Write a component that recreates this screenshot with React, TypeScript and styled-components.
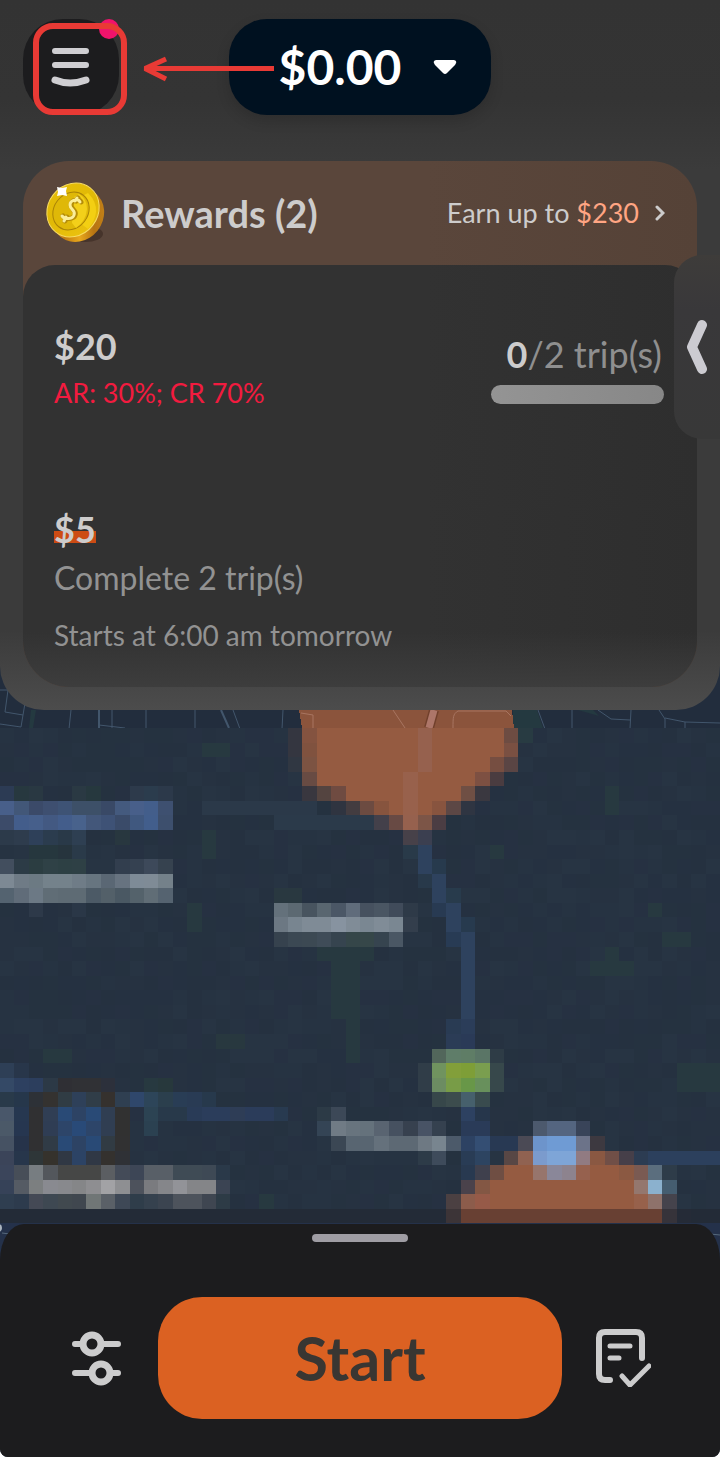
import React from 'react';
import styled, { createGlobalStyle } from 'styled-components';

const GlobalStyle = createGlobalStyle`
  * { box-sizing: border-box; }
  body { margin: 0; background: #ffffff; }
  button { border: 0; padding: 0; margin: 0; background: none; color: inherit; font: inherit; cursor: pointer; }
`;

const Screen = styled.div`
  position: relative;
  display: flex;
  flex-direction: column;
  min-height: 100vh;
  overflow: hidden;
  border-radius: 0 0 8px 8px;
  background: #263242;
  color: #cdcccc;
  font-family: Lato, 'Liberation Sans', sans-serif;
`;

const TopPanel = styled.header`
  position: relative;
  z-index: 1;
  display: flex;
  flex-direction: column;
  gap: 46px;
  padding: 19px 23px 23px;
  border-radius: 0 0 44px 44px;
  background: linear-gradient(180deg, #333333 0, #343434 100px, #3b3b3b 170px, #3b3b3b 630px, #4c4c4c 100%);
`;

const TopBar = styled.div`
  display: grid;
  grid-template-columns: 1fr auto 1fr;
  align-items: center;
`;

const MenuButton = styled.button`
  position: relative;
  width: 96px;
  height: 96px;
  border-radius: 40px;
  background: #1c1c1e;
`;

const MenuIcon = styled.svg`
  display: block;
`;

const Badge = styled.span`
  position: absolute;
  top: 0;
  right: 0;
  width: 20px;
  height: 20px;
  border-radius: 50%;
  background: #f0136b;
`;

const Annotation = styled.svg`
  position: absolute;
  top: 0;
  left: 0;
  z-index: 2;
  pointer-events: none;
`;

const BalanceButton = styled.button`
  display: flex;
  align-items: center;
  gap: 32px;
  height: 96px;
  padding: 0 34px 0 50px;
  border-radius: 38px;
  background: #001120;
  box-shadow: 0 6px 14px rgba(0, 0, 0, 0.14);
  color: #ffffff;
  font-size: 48px;
  font-weight: 700;
  line-height: 56px;
`;

const RewardsCard = styled.section`
  border-radius: 46px;
  background: linear-gradient(90deg, #5a463b 60%, #554237);
`;

const RewardsHeader = styled.div`
  display: flex;
  align-items: center;
  justify-content: space-between;
  height: 104px;
  padding: 0 32px 0 22px;
`;

const RewardsTitle = styled.h2`
  display: flex;
  align-items: center;
  gap: 14px;
  margin: 0;
  font-size: 38px;
  font-weight: 700;
  line-height: 44px;
`;

const EarnLink = styled.a`
  display: flex;
  align-items: center;
  gap: 16px;
  color: #cdcccc;
  font-size: 27px;
  line-height: 36px;
  text-decoration: none;
`;

const Accent = styled.span`
  color: #ffa583;
`;

const RewardsBody = styled.ul`
  display: flex;
  flex-direction: column;
  gap: 96px;
  margin: 0;
  padding: 59px 33px 34px 31px;
  border-radius: 32px 32px 46px 46px;
  background: linear-gradient(180deg, rgba(60, 60, 60, 0) 87%, #3d3d3d 100%), linear-gradient(90deg, #323232 60%, #2e2e2e);
  list-style: none;
`;

const Reward = styled.li`
  display: flex;
  justify-content: space-between;
`;

const RewardText = styled.div`
  display: flex;
  flex-direction: column;
  align-items: flex-start;
`;

const Amount = styled.strong<{ $marked?: boolean }>`
  background: ${(p) => (p.$marked ? 'linear-gradient(#cc4b14, #cc4b14) 0 24px / 100% 12px no-repeat' : 'none')};
  font-size: 36px;
  font-weight: 700;
  line-height: 44px;
`;

const Condition = styled.p<{ $alert?: boolean }>`
  margin: ${(p) => (p.$alert ? '7px 0 0' : '9px 0 0')};
  color: ${(p) => (p.$alert ? '#f21b3f' : '#929292')};
  font-size: ${(p) => (p.$alert ? '27px' : '32px')};
  line-height: 36px;
`;

const Schedule = styled.p`
  margin: 21px 0 0;
  color: #929292;
  font-size: 28px;
  line-height: 36px;
`;

const Progress = styled.div`
  display: flex;
  flex-direction: column;
  align-items: flex-end;
  gap: 9px;
  padding-top: 8px;
  color: #8f8f8f;
  font-size: 36px;
  line-height: 44px;
`;

const Count = styled.span`
  padding-right: 2px;
`;

const Done = styled.strong`
  color: #cdcccc;
  font-weight: 700;
`;

const Track = styled.div`
  width: 173px;
  height: 19px;
  border-radius: 10px;
  background: linear-gradient(90deg, #949494, #878787);
`;

const DrawerTab = styled.button`
  position: absolute;
  top: 255px;
  right: 0;
  z-index: 3;
  display: flex;
  align-items: center;
  justify-content: flex-end;
  width: 46px;
  height: 184px;
  padding-right: 12px;
  border-radius: 28px 0 0 28px;
  background: linear-gradient(180deg, #3e3c3a, #39383a 30%, #383838);
`;

const MapArea = styled.main`
  flex: 1;
  display: flex;
  min-height: 400px;
  margin: -60px 0 -44px;
`;

const MapDrawing = styled.svg`
  flex: 1;
  width: 100%;
  min-width: 0;
`;

const Sheet = styled.footer`
  position: relative;
  z-index: 1;
  display: flex;
  flex-direction: column;
  align-items: stretch;
  gap: 55px;
  padding: 10px 62px 38px;
  border-radius: 24px 24px 0 0 / 36px 36px 0 0;
  background: #1c1c1e;
`;

const Handle = styled.div`
  align-self: center;
  width: 96px;
  height: 8px;
  border-radius: 4px;
  background: #9f9da4;
`;

const Actions = styled.div`
  display: flex;
  align-items: center;
  gap: 26px;
`;

const IconButton = styled.button`
  display: flex;
  align-items: center;
  justify-content: center;
  width: 70px;
  height: 70px;
`;

const StartButton = styled.button`
  flex: 1;
  height: 122px;
  border-radius: 44px;
  background: #db6122;
  color: #393632;
  font-size: 61px;
  font-weight: 700;
  line-height: 72px;
`;

const O = '#955b41';
const ROAD = '#2e425e';
const GREEN = '#273940';

// Map tiles as [row, first column, colours from left to right]; '' leaves the ground showing.
type Tiles = [number, number, string[]];
const fill = (n: number, c: string): string[] => Array(n).fill(c);

const tiles: Tiles[] = [
  [50, 20, ['#343640', '#845340', ...fill(7, O), '#96614e', ...fill(5, O), '#6d4c42', '#283b42']],
  [51, 20, ['#343640', '#80523f', ...fill(7, O), '#96614e', ...fill(5, O), '#7a5042']],
  [52, 20, ['#303742', '#7c5342', ...fill(7, O), '#96614e', ...fill(4, O), '#764e41', '#5a4544']],
  [53, 21, ['#684b43', ...fill(6, O), '#98614c', ...fill(4, O), '#7d5042', '#4a3c40']],
  [54, 21, ['#39373f', '#544440', '#6f4b41', ...fill(4, O), '#98614c', ...fill(3, O), '#6f4f44', '#3a3840']],
  [55, 23, ['#2f3440', '#433c40', '#6c4b41', '#87543e', O, '#98614c', O, '#88543f', '#5c4745', '#2f3542']],
  [56, 26, ['#43404a', '#684a44', '#96614e', '#7c5547', '#4b3d43']],
  [57, 28, ['#474149', '#3b3f50']],
  [55, 12, ['', '', ...fill(8, '#2b3949')]],
  [56, 19, fill(7, '#2b3a4a')],
  [58, 28, ['#293a49', ROAD]],
  [59, 29, [ROAD, '#273a4d']],
  [60, 29, ['#28394a', ROAD]],
  [61, 30, [ROAD, '#283b4c']],
  [62, 30, ['#283a52', ROAD]],
  [63, 31, [ROAD, '#273a4e']],
  [64, 31, ['#283b54', ROAD]],
  ...[65, 66, 67, 68, 69].map((r): Tiles => [r, 32, [ROAD]]),
  [70, 31, ['#293b53', '#2b3d59']],
  [71, 31, ['#2b3c56', '#2a3a57']],
  [61, 19, ['#293840', '#293840']],
  [62, 19, ['#64717b', '#5c6972', '#48545f', '#596670', '#4b5766', '#606c7b', '#46515f', '#4a5663', '#404b5a', '#2e3a48']],
  [63, 19, ['#6c7883', '#788590', '#7f8b96', '#7f8b96', '#8793a0', '#808c97', '#7a8792', '#808c97', '#7a8792', '#333e4c']],
  [64, 19, ['#36424e', '#3b4853', '#3c4953', '#3f4c58', '#36444f', '#354649', '#364749', '#36444f', '#4a5764']],
  [54, 0, ['#2c3b54', '#27383f', '#293842', '', '', '#2a3943', '#26383e', '', '', '#2d3a4b', '#2b3c4d', '#2c394a']],
  [55, 0, ['#485f8a', '#425778', '#3b4a69', '#3e4f70', '#3e5375', '#3d5068', '#3d5068', '#394966', '#445a7e', '#485f8a', '#435e8b', '#3e5070']],
  [56, 0, ['#3c4b69', '#435d8b', '#465f8b', '#435982', '#435d8b', '#48628c', '#43577a', '#3e5276', '#3a4b69', '#40587f', '#425e8c', '#3d4f6d']],
  [57, 0, ['#2c3a4a', '#2e3c4d', '#2e4059', '#2b3c4e', '#293948', '#2e3f52', '', '', '#28373f']],
  [58, 0, ['', '', '#26373e', '#26373e', '#26343d', '#2a3a49']],
  [59, 0, ['#424e5e', '#2c3b46', '#2b3d41', '#2f4146', '#2d4044', '#2e4045', '', '', '#323e4e', '#354151', '#3d495a', '#36424f']],
  [60, 0, ['#7d8994', '#6f7b86', '#6c7a83', '#74828b', '#74828b', '#6f7c87', '#677580', '#5a6774', '#677380', '#7e8b97', '#7f8b96', '#74818a']],
  [61, 0, ['#546370', '#606c79', '#6c7985', '#606d76', '#5e6b74', '#5e6b74', '#4c5a66', '#536069', '#4a5863', '#54626b', '#606d76', '#556370']],
  [62, 2, ['#2d3949', '', '', '#2a3747']],
  [71, 14, ['', '#28383f', '#28383f']],
  [73, 0, ['#2e3f56', '#28364a']],
  [74, 0, ['#344966', '#2d4060', '#2c3e5d', '#2c3946', '#2f2f34', '#303135', '#303135', '#2c303b', '', '', GREEN, '#27383c']],
  [75, 0, ['#293a4a', '#26374b', '#2d3137', '#343230', '#303c44', '#2e4059', '#303d48', '#35312e', '#2f3f51', '#2f476b', '#2d4559', '#2b3f4d', '#293d55', '#293b54', '#27394c']],
  [76, 0, ['#49576a', '#263750', '#303032', '#303e54', '#294a76', '#2d4364', '#294a76', '#303e52', '#313131', '', '#2c4353', '#28394a', '#28394a', '#293b57', '#2b3d5b', '#2b3d5b', '#2e3d56', '#2b3c5a', '#2b3c5a', '#283a50']],
  [77, 0, ['#4b5968', '#263650', '#303032', '#2f3d54', '#2d4569', '#294a78', '#2d4569', '#303e52', '#313131', '', '#2b4151']],
  [78, 0, ['#465263', '#26334a', '#303032', '#303b46', '#294a76', '#2d4364', '#294a76', '#313b43', '#313132']],
  [79, 0, ['#3b4459', '#27364b', '#2e3638', '#35322c', '#303844', '#2c4365', '#303845', '#34312e', '#2f3136']],
  [80, 0, ['#3b455b', '#474e58', '#777d81', '#53575c', '#464746', '#464746', '#464746', '#5b5e62', '#444b58', '#3d4656', '#585f67', '#585f67', '#3f4b55', '#3f4b55', '#3e4955', '#2a3949']],
  [81, 0, ['#364258', '#555b64', '#7c7f80', '#898a90', '#88898d', '#858688', '#8e8e91', '#a2a2a5', '#8e8f92', '#4d525c', '#7a7b7f', '#85868a', '#929398', '#848588', '#848588', '#3b4453']],
  [82, 0, ['#2f3e50', '#2d3b4d', '#444955', '#3e4852', '#41494f', '#40474f', '#707676', '#5a6067', '#3e4856', '#2f3d4a', '#35414e', '#3b4450', '#4d535c', '#4d535c', '#3f4651', '#2d3b46']],
  [72, 30, ['#52665b', '#5f7d69', '#5f7d66', '#5a7566', '#2e3c46']],
  [73, 29, ['#303d48', '#70935f', '#829f3a', '#7e9e37', '#7a9e4f', '#37484b']],
  [74, 29, ['#303d48', '#6c8c62', '#789c47', '#689748', '#68905c', '#37484b']],
  [75, 30, ['#37474a', '#3c4c4d', '#46606c', '#394b4e']],
  [76, 22, ['#2c3a46', '#3c4857', '', '', '', '', '', '', '', '', '#2d4161', '#26364b']],
  [77, 22, ['#344455', '#707b85', '#68747e', '#65727c', '#596471', '#465160', '#37414f', '#485365', '#35414f', '', '#2a3b58', '#2a3b58']],
  [78, 23, ['#3b4754', '#586571', '#586571', '#65717c', '#5d6974', '#5d6974', '#6e7983', '#78858f', '#4c5a6a', '#2d4263', '#344e73', '#283953', '#283953']],
  [79, 29, ['#2d3b48', '#3e4b5b', '', '#293c55', '#2d4461']],
  [77, 37, ['#4c596d', '#546580', '#546580', '#394459']],
  [78, 36, ['#4b4a55', '#6d94cb', '#6f9bd4', '#6f9bd4', '#6c7389', '#3d3940']],
  [79, 35, ['#584745', '#906251', '#7b9bcd', '#7ea5d7', '#7ea5d7', '#917b82', '#8a5842', '#704f47', '#463f49', '#2c3c52', ...fill(5, '#2c405d')]],
  [80, 32, ['#283950', '#3f404d', '#6f4e43', O, O, '#97756c', '#8a8799', '#8d838e', '#96614e', O, O, '#8b5942', '#7a5a52', '#5b6e7e', '#2e3c49']],
  [81, 32, ['#4a424b', '#835744', ...fill(10, O), '#94776e', '#8bb1ce', '#455d70']],
  [82, 31, ['#4b4042', '#8c5c4b', '#965a48', ...fill(10, O), '#97614b', '#8e726b', '#45434c']],
  [83, 31, ['#3c3437', ...fill(14, '#684033'), '#36333a', '#252b37']],
];

const shrubs: Array<[number, number, number, number]> = [
  [51, 14, 2, 1], [57, 14, 1, 2], [65, 22, 4, 1], [66, 23, 2, 4], [70, 24, 1, 3],
  [58, 34, 1, 1], [62, 45, 1, 1], [64, 46, 2, 1], [66, 41, 3, 1], [65, 42, 1, 1],
  [54, 42, 1, 2], [73, 47, 3, 2], [72, 3, 2, 1], [62, 13, 1, 1], [63, 13, 1, 1], [82, 18, 1, 1],
];

const grounds = ['#263241', '#253140', '#263342', '#263142', '#273443', '#253240', '#253141'];
const px = (col: number) => Math.round(col * 14.4);
const py = (row: number) => Math.floor(row * 14.57);

const Tile = ({ row, col, w = 1, h = 1, color }: { row: number; col: number; w?: number; h?: number; color: string }) => (
  <rect x={px(col)} y={py(row)} width={px(col + w) - px(col)} height={py(row + h) - py(row)} fill={color} />
);

const CityMap = () => (
  <MapDrawing viewBox="0 650 720 618" preserveAspectRatio="xMidYMid slice" role="img" aria-label="Map" shapeRendering="crispEdges">
    <rect x="0" y="650" width="720" height="618" fill="#222d3d" />
    <g fill="none" stroke="#42566c" strokeWidth="1" shapeRendering="auto">
      <path d="M0 690h8l-3 22 18 3M0 724l21 3 5-30M71 710l-2 19M99 710v19M112 710v19M99 725l26 3M146 710v19M195 710v19M233 710l7 19M282 729l1-19M538 710l7 19M572 710v19M598 710l13 9 19 1M631 710l-1 19M659 710l6 9v10M665 718l20 4 35 1M685 722v7" />
      <path d="M221 710l8 18M99 710v18" strokeWidth="2" />
    </g>
    <path d="M31 710h5l-3 18h-4zM513 710h24l6 18h-30zM578 710h15l6 6z" fill="#243940" shapeRendering="auto" />
    <path d="M299 710h213l2 18H302z" fill="#8b543c" />
    <g shapeRendering="auto" fill="none" stroke="#a87561">
      <path d="M301 713l12 2v13M393 710l12 18M453 728c0-11 0-14 5-17h48l5 5" />
      <path d="M434 710l-5 18" stroke="#71402c" strokeWidth="10" />
      <path d="M434 710l-5 18" stroke="#ad7669" strokeWidth="7" />
    </g>
    {Array.from({ length: 37 * 50 }, (_, i) => {
      const row = 50 + Math.floor(i / 50);
      const col = i % 50;
      const noise = Math.sin(row * 12.9898 + col * 78.233) * 43758.5453;
      const pick = Math.floor((noise - Math.floor(noise)) * grounds.length);
      return <Tile key={i} row={row} col={col} color={row === 83 ? '#232b37' : row > 83 ? '#24314a' : grounds[pick]} />;
    })}
    {shrubs.map(([row, col, w, h]) => (
      <Tile key={`${row}-${col}`} row={row} col={col} w={w} h={h} color={GREEN} />
    ))}
    {tiles.map(([row, first, colors], i) =>
      colors.map((color, j) => color && <Tile key={`${i}-${j}`} row={row} col={first + j} color={color} />),
    )}
    <circle cx="-2" cy="1228" r="4" fill="#aab4bf" shapeRendering="auto" />
    <path d="M2 1233l8 1M710 1234l10 1" stroke="#56697c" shapeRendering="auto" />
  </MapDrawing>
);

const Coin = () => (
  <svg width="62" height="64" viewBox="0 0 62 64" aria-hidden="true">
    <defs>
      <linearGradient id="coinFace" x1="0" y1="0.2" x2="1" y2="0.8">
        <stop offset="0" stopColor="#e6be08" />
        <stop offset="0.5" stopColor="#e0b806" />
        <stop offset="1" stopColor="#ecc20f" />
      </linearGradient>
      <linearGradient id="coinRim" x1="0" y1="1" x2="1" y2="0">
        <stop offset="0.1" stopColor="#f0b73c" />
        <stop offset="0.3" stopColor="#c07a12" />
        <stop offset="0.5" stopColor="#e9a81c" />
        <stop offset="0.7" stopColor="#b87412" />
        <stop offset="1" stopColor="#c98a1c" />
      </linearGradient>
    </defs>
    <ellipse cx="40" cy="53" rx="18" ry="8" fill="#46342b" />
    <ellipse cx="33" cy="34" rx="25" ry="28" transform="rotate(38 33 34)" fill="url(#coinRim)" />
    <ellipse cx="28" cy="29" rx="25" ry="28" transform="rotate(38 28 29)" fill="url(#coinFace)" stroke="#f7dc62" strokeWidth="1" />
    <path d="M43 12q9 9 8 19-1 9-8 17L31 39 27 20z" fill="#f3cf13" />
    <ellipse cx="26" cy="30" rx="17" ry="20" transform="rotate(38 26 30)" fill="#dfb808" stroke="#a98307" strokeWidth="1" />
    <path d="M34 13q8 5 8 15-1 12-11 19l-4-5 2-26z" fill="#f3d01a" />
    <g fill="none" strokeLinecap="round" strokeLinejoin="round">
      <path d="M36 21c-2-4-10-2-10 3 0 5 6 5 4 10-1 4-9 5-12 1M33 17l-2 3M22 36l-2 4" stroke="#b58d08" strokeWidth="5" />
      <path d="M35 21c-2-4-10-2-10 3 0 5 6 5 4 10-1 4-9 5-12 1M32 17l-2 3M21 36l-2 4" stroke="#fbee9a" strokeWidth="3" />
    </g>
    <path d="M12 6l5 1 5-1-1 4 1 5-5-1-5 1 1-4z" fill="#ffffff" />
  </svg>
);

export default function App() {
  return (
    <>
      <GlobalStyle />
      <Screen>
        <TopPanel>
          <TopBar>
            <MenuButton type="button" aria-label="Menu">
              <MenuIcon width="96" height="96" viewBox="0 0 96 96" fill="none" stroke="#cfced2" strokeWidth="6" strokeLinecap="round">
                <path d="M32 32h31M32 46h31" />
                <path d="M32 61q15 6 31 0" strokeWidth="7" />
              </MenuIcon>
              <Badge />
            </MenuButton>
            <BalanceButton type="button">
              $0.00
              <svg width="24" height="16" viewBox="0 0 24 16" fill="#ffffff" aria-hidden="true">
                <path d="M3 1h18q4 1 1 5l-8 8q-2 2-4 0L2 6Q-1 2 3 1z" />
              </svg>
            </BalanceButton>
          </TopBar>
          <RewardsCard>
            <RewardsHeader>
              <RewardsTitle>
                <Coin />
                Rewards (2)
              </RewardsTitle>
              <EarnLink href="#rewards">
                <span>
                  Earn up to <Accent>$230</Accent>
                </span>
                <svg width="10" height="16" viewBox="0 0 10 16" fill="none" stroke="#cdcccc" strokeWidth="3" strokeLinecap="round" aria-hidden="true">
                  <path d="M2 2l6 6-6 6" />
                </svg>
              </EarnLink>
            </RewardsHeader>
            <RewardsBody>
              <Reward>
                <RewardText>
                  <Amount>$20</Amount>
                  <Condition $alert>AR: 30%; CR 70%</Condition>
                </RewardText>
                <Progress>
                  <Count>
                    <Done>0</Done>/2 trip(s)
                  </Count>
                  <Track role="progressbar" aria-label="Trips completed" aria-valuemin={0} aria-valuemax={2} aria-valuenow={0} />
                </Progress>
              </Reward>
              <Reward>
                <RewardText>
                  <Amount $marked>$5</Amount>
                  <Condition>Complete 2 trip(s)</Condition>
                  <Schedule>Starts at 6:00 am tomorrow</Schedule>
                </RewardText>
              </Reward>
            </RewardsBody>
          </RewardsCard>
        </TopPanel>
        <Annotation width="290" height="130" viewBox="0 0 290 130" fill="none" stroke="#e83a35" aria-hidden="true">
          <rect x="36" y="26" width="88" height="86" rx="17" strokeWidth="6" />
          <path d="M274 68.5H148" strokeWidth="5" />
          <path d="M166 59l-21 9.500 21 10.500" strokeWidth="5" strokeLinejoin="bevel" />
        </Annotation>
        <DrawerTab type="button" aria-label="Open drawer">
          <svg width="22" height="56" viewBox="0 0 22 56" fill="none" stroke="#cccbd1" strokeWidth="10" strokeLinecap="round" strokeLinejoin="round" aria-hidden="true">
            <path d="M16 6L6 28l10 22" />
          </svg>
        </DrawerTab>
        <MapArea>
          <CityMap />
        </MapArea>
        <Sheet>
          <Handle />
          <Actions>
            <IconButton type="button" aria-label="Preferences">
              <svg width="50" height="56" viewBox="0 0 50 56" fill="none" stroke="#cccccd" strokeWidth="6" strokeLinecap="round">
                <path d="M3 14h8M30 14h16M3 43h17M40 43h6" />
                <circle cx="20" cy="14" r="9" strokeWidth="7" />
                <circle cx="29" cy="43" r="9" strokeWidth="7" />
              </svg>
            </IconButton>
            <StartButton type="button">Start</StartButton>
            <IconButton type="button" aria-label="Completed trips">
              <svg width="56" height="58" viewBox="0 0 56 58" fill="none" stroke="#cccccd" strokeLinecap="round" strokeLinejoin="round">
                <path d="M15 51H10q-6 0-6-6V9q0-6 6-6h31q6 0 6 6v20" strokeWidth="6" />
                <path d="M15 17h20M15 29h9M27 47l8 9 19-19" strokeWidth="5" />
              </svg>
            </IconButton>
          </Actions>
        </Sheet>
      </Screen>
    </>
  );
}
